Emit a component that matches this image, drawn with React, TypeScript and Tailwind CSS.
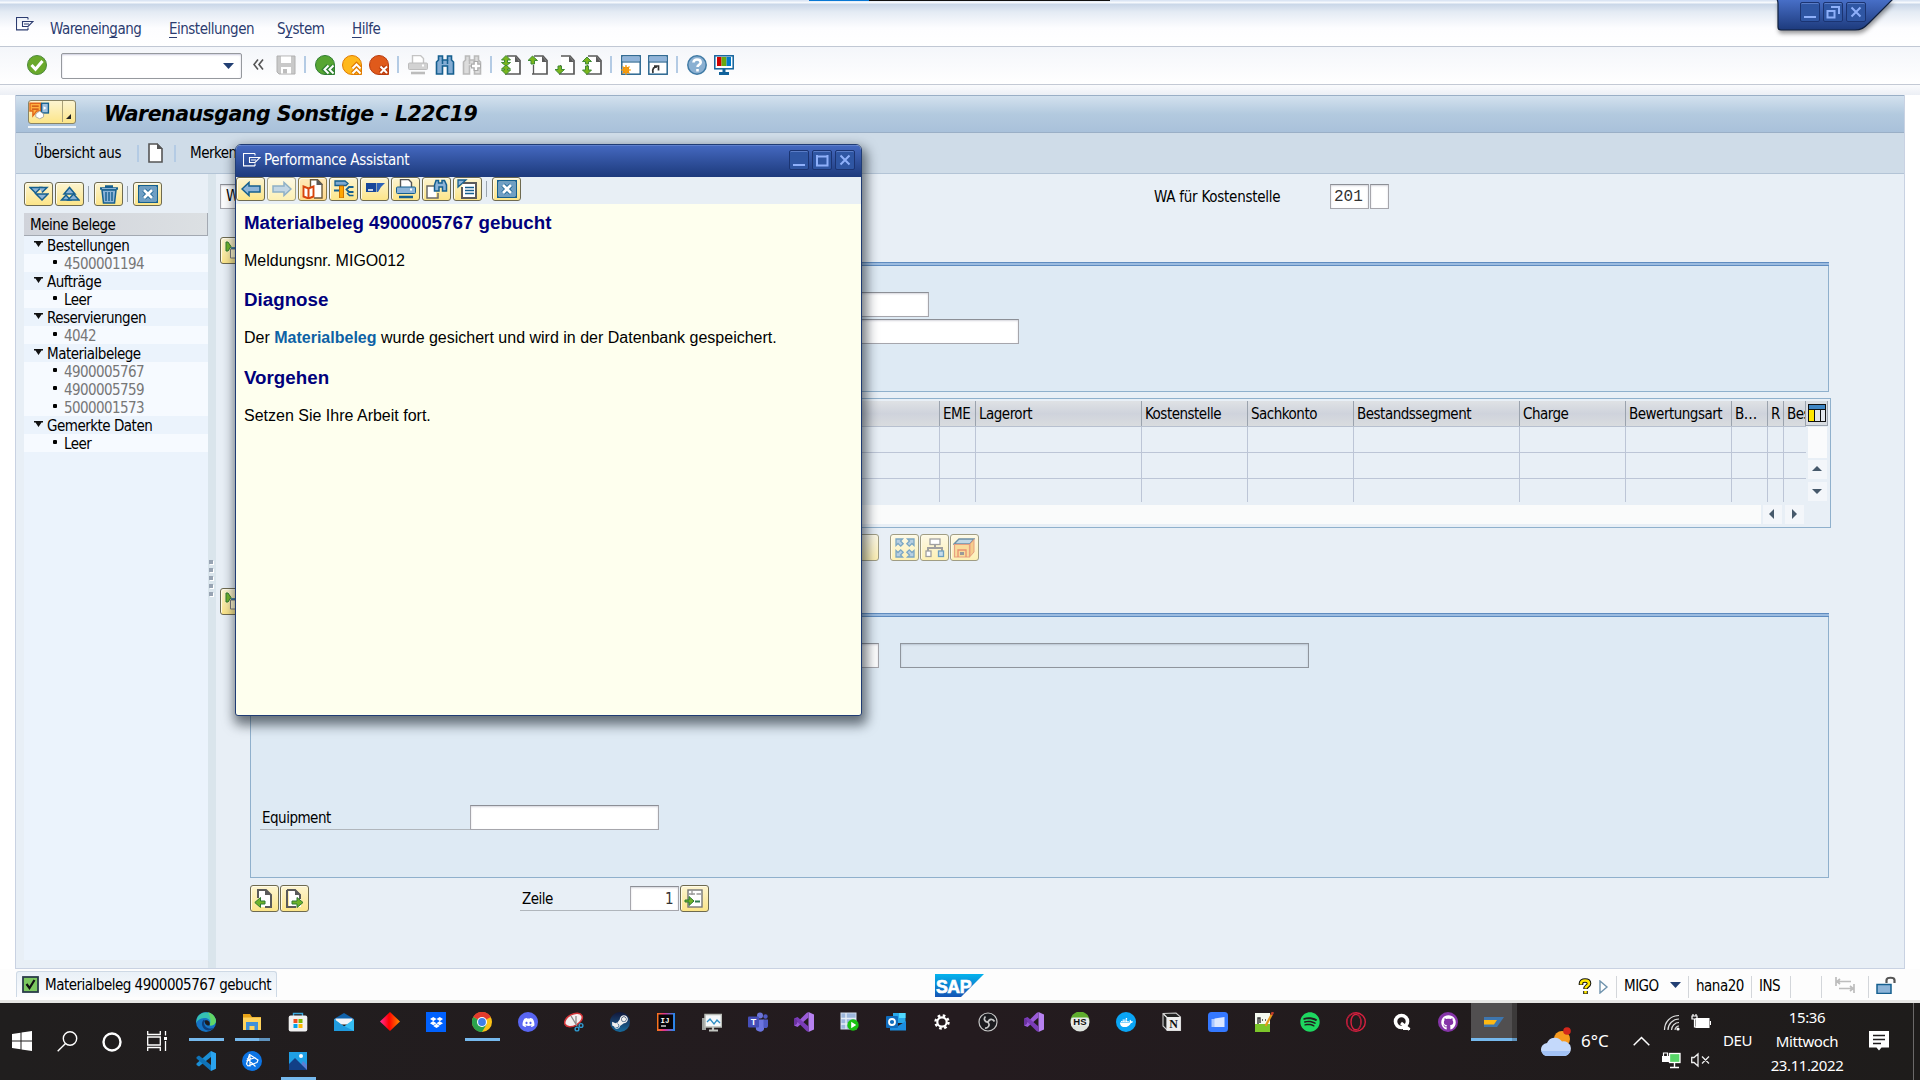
import React from "react";
import { FaDiscord, FaSteamSymbol, FaSpotify, FaDropbox, FaDocker, FaGithub } from "react-icons/fa";

type Kids = { children?: React.ReactNode };

function Svg({ w = 20, h = 20, children, className = "" }: Kids & { w?: number; h?: number; className?: string }) {
  return (
    <svg width={w} height={h} viewBox={`0 0 ${w} ${h}`} fill="none" className={`block shrink-0 ${className}`}>
      {children}
    </svg>
  );
}

const Sep = () => <div className="mx-2 h-[17px] w-[2px] shrink-0 bg-[#b4cbe4]" />;
const GroupSep = () => <div className="ml-[1px] mr-[2px] h-[17px] w-[2px] shrink-0 bg-[#b4cbe4]" />;

/* ---------- standard toolbar icons ---------- */
const MenuGlyph = ({ color }: { color: string }) => (
  <Svg w={18} h={14}>
    <path d="M12 .5H.5v12.400H12M12 .5v2M12 10.500v2.400M6.500 4.500H17l-5 5H6.500zM8 7h5" stroke={color} strokeWidth="1.100" />
  </Svg>
);

const OkIcon = () => (
  <Svg>
    <circle cx="10" cy="10" r="9.500" fill="#6aa92b" stroke="#4d8a3c" />
    <path d="M4.500 10l4 4.300 7-8.300" stroke="#fff" strokeWidth="3" />
  </Svg>
);

const SaveIcon = () => (
  <Svg>
    <path d="M1 1h18v18H3l-2-2z" fill="#c9c9c9" stroke="#b0b0b0" />
    <path d="M5 1.500h10V8H5zM5 12h10v6.500H5z" fill="#fff" />
    <path d="M7 14h4v4.500H7z" fill="#bdbdbd" />
  </Svg>
);

function RoundIcon({ fill, edge, d }: { fill: string; edge: string; d: string }) {
  return (
    <Svg>
      <path d="M10 .5a9.500 9.500 0 1 0 0 19h9.500V10A9.500 9.500 0 0 0 10 .5z" fill={fill} stroke={edge} />
      <path d={d} stroke={edge} strokeWidth="4.500" />
      <path d={d} stroke="#fff" strokeWidth="2" />
    </Svg>
  );
}

const PrintIcon = ({ body, dark, paper }: { body: string; dark: string; paper: string }) => (
  <Svg>
    <path d="M4.500 8V.5h8l3 3V8" fill="#fff" stroke={paper} strokeWidth="1.400" />
    <rect x=".5" y="8" width="19" height="6.500" rx="1" fill={body} stroke={dark} />
    <rect x="14" y="9.500" width="2" height="2" fill="#fff" />
    <path d="M3 18h14" stroke={dark} strokeWidth="2.600" />
  </Svg>
);

const FindIcon = ({ a, b, plus = false }: { a: string; b: string; plus?: boolean }) => (
  <Svg>
    <path d="M3.500 1h4v4h5V1h4v4l2 2v12h-6v-8h-5v8h-6V7l2-2z" fill={a} stroke={b} strokeWidth="1.600" />
    <path d="M7.500 5v4M12.500 5v4" stroke={b} strokeWidth="1.500" />
    {plus && <path d="M14 6v10M9 11h10" stroke="#aaa" strokeWidth="5" />}
    {plus && <path d="M14 7v8M10 11h8" stroke="#fff" strokeWidth="2.400" />}
  </Svg>
);

const up = "M4.500 1L0 5.500h3V9h3.500V5.500h3z";
const down = "M4.500 19L0 14.500h3V11h3.500v3.500h3z";
const upTop = "M5 .5L.5 5h3v2.500H.5L5 11l4.500-3.500h-3V5h3z";
const upBottom = "M5 10L.5 14h3v1H.5L5 19.500 9.500 15h-3v-1h3z";
function PageIcon({ arrows }: { arrows: string[] }) {
  return (
    <Svg>
      <path d="M6 1h9l4 4v14H6" fill="#fff" />
      <path d="M6 1h9l4 4.500V19H4" stroke="#5a5a5a" strokeWidth="1.700" />
      <path d="M5.500 10v9" stroke="#5a5a5a" strokeWidth="1.300" />
      <path d="M14 1v6h5z" fill="#5a5a5a" />
      {arrows.map((d) => (
        <path key={d} d={d} fill="#7ab51d" stroke="#3f8a35" strokeWidth="1" />
      ))}
    </Svg>
  );
}

function WindowIcon({ children }: Kids) {
  return (
    <Svg>
      <rect x=".8" y=".8" width="18.400" height="18.400" fill="#fff" stroke="#2a6690" strokeWidth="1.500" />
      <rect x="1.500" y="1.500" width="17" height="5" fill="#90b4da" />
      <path d="M1 7h18" stroke="#2a6690" strokeWidth="1.200" />
      {children}
    </Svg>
  );
}

const HelpIcon = () => (
  <Svg>
    <circle cx="10" cy="10" r="9.200" fill="#8bb0d2" stroke="#3f7aa5" strokeWidth="1.500" />
    <path d="M6.500 7.500c0-2 1.500-3 3.500-3s3.700 1 3.700 3c0 2.300-3.200 2.300-3.200 4.500M10.500 14v2.400" stroke="#fff" strokeWidth="2.600" />
  </Svg>
);

const MonitorIcon = () => (
  <Svg>
    <rect x=".8" y=".8" width="18.400" height="13" fill="#fff" stroke="#11629b" strokeWidth="1.500" />
    <path d="M3 2h4.500v9H3z" fill="#d00000" />
    <path d="M7.500 2h5v9h-5z" fill="#6aa80f" />
    <path d="M12.500 2H17v9h-4.500z" fill="#0079c8" />
    <path d="M10 14v4M5 18.500h10" stroke="#11629b" strokeWidth="3" />
  </Svg>
);

/* ---------- yellow push buttons ---------- */
function Btn({ children, tall = false, dim = false, hot = false }: Kids & { tall?: boolean; dim?: boolean; hot?: boolean }) {
  return (
    <div
      className={`flex w-[29px] shrink-0 items-center justify-center rounded-[3px] border-[1.500px] bg-gradient-to-b ${tall ? "h-[27px]" : "h-6"} ${
        dim ? "border-[#a09d84] from-[#fdf9e6] to-[#fdf0b4]" : hot ? "border-[#8a7a48] from-[#ffe9b8] to-[#ffd98a]" : "border-[#6e6a50] from-[#fcf4d0] to-[#fce588]"
      } shadow-[inset_1px_1px_0_#fffbe8]`}
    >
      {children}
    </div>
  );
}

const BSep = () => <div className="mx-[4px] mt-1 h-4 w-px shrink-0 bg-[#9aa4ae]" />;
const blueA = "#8db4d8";
const blueB = "#155f8f";

const CloseBox = () => (
  <Svg w={20} h={18}>
    <rect x=".8" y=".8" width="18.400" height="16.400" fill="#fff" stroke="#155f8f" strokeWidth="1.600" />
    <rect x="2" y="2" width="16" height="14" fill="#6f9fc4" />
    <path d="M6 5l8 8M14 5l-8 8" stroke="#155f8f" strokeWidth="4.500" />
    <path d="M6 5l8 8M14 5l-8 8" stroke="#fff" strokeWidth="2.800" />
  </Svg>
);

const Expand = () => (
  <Svg w={20} h={18}>
    <path d="M1 2.500h11L6.500 8zM7 9h12l-6 6z" fill={blueA} stroke={blueB} strokeWidth="1.500" />
    <path d="M10 2.500h8l-5 5" fill={blueA} stroke={blueB} strokeWidth="1.500" />
  </Svg>
);
const Collapse = () => (
  <Svg w={20} h={18}>
    <path d="M4 9h11L9.500 2.500z" fill={blueA} stroke={blueB} strokeWidth="1.500" />
    <path d="M1.500 15h9l-4.500-5z" fill={blueA} stroke={blueB} strokeWidth="1.500" />
    <path d="M8 15h11l-5.500-6z" fill={blueA} stroke={blueB} strokeWidth="1.500" />
  </Svg>
);
const Trash = () => (
  <Svg w={20} h={20}>
    <path d="M3 6h14l-1.500 13h-11z" fill={blueA} stroke={blueB} strokeWidth="1.500" />
    <path d="M7 8v9M10 8v9M13 8v9" stroke={blueB} strokeWidth="1.400" />
    <path d="M1 4.500h18M6 2.500h8" stroke={blueB} strokeWidth="2.600" />
    <path d="M3 4.500h14" stroke={blueA} strokeWidth="1" />
  </Svg>
);
const Arrow = ({ flip = false, dim = false }) => (
  <Svg w={20} h={16} className={flip ? "-scale-x-100" : ""}>
    <path d="M1 8l7-6.500V5h11v6H8v3.500z" fill={dim ? "#c3d6e4" : blueA} stroke={dim ? "#8fb0c6" : blueB} strokeWidth="1.500" />
  </Svg>
);
const DocBook = () => (
  <Svg w={22} h={20}>
    <path d="M8.500 8V.8h7l4.500 4.500V19h-8" fill="#fff" stroke="#6a5a3c" strokeWidth="1.400" />
    <path d="M14.500 0v6H21z" fill="#5a5a5a" />
    <path d="M1.500 7.500l5 2 5-2v10l-5 2-5-2z" fill="#fff" stroke="#d8440c" strokeWidth="1.900" />
    <path d="M6.500 9.500v10" stroke="#d8440c" strokeWidth="2" />
  </Svg>
);
const Tools = () => (
  <Svg w={20} h={18}>
    <path d="M1 1h10l3 2.500-2 2H1z" fill="#7fa9cf" stroke={blueB} strokeWidth="1.300" />
    <path d="M19.500 7H15l-2.500 2.500L15 12h4.500" stroke={blueB} strokeWidth="1.800" />
    <path d="M13 13l2.500 2.500h4" stroke={blueB} strokeWidth="1.600" />
    <path d="M5.500 6h4v12h-4z" fill="#ffa500" stroke="#cf7200" />
    <path d="M0 10.500h5" stroke={blueB} strokeWidth="2.200" />
  </Svg>
);
const Flag = () => (
  <Svg w={20} h={14}>
    <rect x="1" y="1" width="10" height="9" fill="#18479a" />
    <path d="M11.500 1H20l-4 4-3 5h-1.500z" fill="#2d62b8" />
    <path d="M3 8h5" stroke="#fff" strokeWidth="1.300" />
  </Svg>
);
const DocFind = () => (
  <Svg w={22} h={20}>
    <path d="M1 7.500h9V19H1z" fill="#fff" />
    <path d="M8 7H1v12h11v-5" stroke="#6a6a6a" strokeWidth="1.500" />
    <path d="M10 1.500h2.500V4H16V1.500h2.500L20.500 6v6h-4V8H13v4H8.500V6z" fill={blueA} stroke={blueB} strokeWidth="1.500" />
  </Svg>
);
const DocList = () => (
  <Svg w={22} h={20}>
    <path d="M6 4h13v15H5V8" fill="#fff" stroke="#5a5a5a" strokeWidth="2" />
    <path d="M1 1h8L1 8z" fill={blueA} stroke={blueB} strokeWidth="1.300" />
    <path d="M8 8.500h9M8 11.500h9M8 14.500h9" stroke={blueB} strokeWidth="1.500" />
  </Svg>
);
const DocMove = ({ right = false }) => (
  <Svg w={20} h={20} className="-ml-px">
    <path d="M5 1h7l5 5v12H5z" fill="#fff" />
    {right ? (
      <path d="M3 1v17h9M3 1h8l5 5v4" stroke="#5a5a5a" strokeWidth="2" />
    ) : (
      <path d="M4 9V1h8l5 5v12h-6" stroke="#5a5a5a" strokeWidth="2" />
    )}
    <path d="M11 0v6h6z" fill="#5a5a5a" />
    {right ? (
      <path d="M8 12h5V8.500l6 5-6 5V15H8z" fill="#6fb32a" stroke="#2f7a30" />
    ) : (
      <path d="M11 12H6.500V8.500L.8 13.500l5.700 5V15H11z" fill="#6fb32a" stroke="#2f7a30" />
    )}
  </Svg>
);
const GoLine = () => (
  <Svg w={20} h={20} className="-ml-[2px]">
    <rect x="4" y="1" width="14" height="17" fill="#fff" stroke="#777" strokeWidth="1.400" />
    <path d="M8 1v5M5 5h6M12.500 5H17" stroke="#999" strokeWidth="1.300" />
    <path d="M11 12.500h5" stroke="#2f7a50" strokeWidth="2" />
    <path d="M1 11h4V7.500l5 4.500-5 4.500V13H1z" fill="#6fb32a" stroke="#2f7a30" />
  </Svg>
);
const Spread = () => (
  <Svg w={20} h={20}>
    {["", "rotate(90 10 10)", "rotate(180 10 10)", "rotate(270 10 10)"].map((t) => (
      <path key={t} transform={t} d="M1 1h6.500L5.500 3l2.700 2.700-2.500 2.500L3 5.500 1 7.500z" fill="#b9d0e2" stroke="#7ba7c4" strokeWidth="1.300" />
    ))}
  </Svg>
);
const Tree = () => (
  <Svg w={20} h={20}>
    <path d="M10 6v4M3 13v-3h14v3" stroke="#a0a0a0" strokeWidth="2" />
    <rect x="5" y="1" width="10" height="5.500" fill="#fff" stroke="#a0a0a0" strokeWidth="1.300" />
    <rect x="1" y="13" width="5" height="5.500" fill="#fff" stroke="#a0a0a0" strokeWidth="1.300" />
    <rect x="13.500" y="13" width="5" height="5.500" fill="#c6dcea" stroke="#6d9fc0" strokeWidth="1.300" />
  </Svg>
);
const Box = () => (
  <Svg w={22} h={20} className="-ml-[2px]">
    <path d="M1 6l5-5h15l-4 5z" fill="#c0d8e6" stroke="#6d8fa5" strokeWidth="1.400" />
    <path d="M1.500 6.500h15V19h-15z" fill="#f8dc9c" stroke="#e8a080" strokeWidth="1.200" />
    <path d="M17 6l4-4.500V14l-4 4.500z" fill="#f5cc8c" stroke="#e8a080" />
    <path d="M5 19v-7h8v7" stroke="#e89070" strokeWidth="1.300" />
    <rect x="7" y="14" width="4" height="3" fill="#999" />
  </Svg>
);
const FormStub = () => (
  <Svg w={20} h={20}>
    <path d="M1 1h2l3 4.500L3 10H1z" fill="#6fb32a" stroke="#2f7a30" />
    <path d="M5.500 8h13v9h-13z" fill="#fff6c8" stroke="#777" />
    <path d="M6 7h12" stroke={blueB} strokeWidth="1.500" />
  </Svg>
);

/* ---------- form pieces ---------- */
function Field({ className, children }: Kids & { className: string }) {
  return (
    <div
      className={`h-[25px] shrink-0 border border-[#a6a6ac] border-t-[#8c8f96] bg-white shadow-[inset_0_1px_2px_#d5d5dc] ${className}`}
    >
      {children}
    </div>
  );
}

const columns: [string, string][] = [
  ["", "w-[689px]"],
  ["EME", "w-[36px]"],
  ["Lagerort", "w-[166px]"],
  ["Kostenstelle", "w-[106px]"],
  ["Sachkonto", "w-[106px]"],
  ["Bestandssegment", "w-[166px]"],
  ["Charge", "w-[106px]"],
  ["Bewertungsart", "w-[106px]"],
  ["B…", "w-[36px]"],
  ["R", "w-[16px]"],
  ["Bes", "w-[22px]"],
];

const tree: [string, 0 | 1 | 2][] = [
  ["Bestellungen", 0],
  ["4500001194", 1],
  ["Aufträge", 0],
  ["Leer", 2],
  ["Reservierungen", 0],
  ["4042", 1],
  ["Materialbelege", 0],
  ["4900005767", 1],
  ["4900005759", 1],
  ["5000001573", 1],
  ["Gemerkte Daten", 0],
  ["Leer", 2],
];

function TitleBtn({ d }: { d: string }) {
  return (
    <div className="flex h-5 w-5 items-center justify-center rounded-[2px] border border-[#1b3472] bg-[#2f56a3] shadow-[inset_0_1px_0_#5a7cc6]">
      <Svg w={14} h={14}>
        <path d={d} stroke="#8fb0fa" strokeWidth="2" />
      </Svg>
    </div>
  );
}
const MIN = "M1 12h12";
const MAX = "M2 3.500h11M2 2v10.500h10.500V2";
const RESTORE = "M5 2h8v7M1.500 6h7v6.500h-7z";
const CLOSE = "M2.500 2.500l9 9M11.500 2.500l-9 9M4 4l6 6M10 4l-6 6";

/* ---------- left navigation ---------- */
function Sidebar() {
  return (
    <div className="flex w-[192px] shrink-0 flex-col pb-2 pl-2">
      <div className="flex h-[39px] items-start pt-2">
        <Btn><Expand /></Btn>
        <div className="w-[2px]" />
        <Btn><Collapse /></Btn>
        <BSep />
        <div className="w-px" />
        <Btn><Trash /></Btn>
        <BSep />
        <div className="w-px" />
        <Btn><CloseBox /></Btn>
      </div>
      <div className="flex h-[23px] items-center border-r border-b border-[#a3a9b2] bg-gradient-to-r from-[#d0d3da] to-[#dce0e3] pt-[2px] pl-[6px]">
        Meine Belege
      </div>
      <div className="grow bg-[#ebf3fc]">
        {tree.map(([label, kind], i) => (
          <div key={i} className={`flex h-[18px] items-center ${kind === 0 ? "pl-[10px]" : "bg-[#f6faff] pl-[29px]"}`}>
            {kind === 0 ? (
              <Svg w={9} h={7} className="mr-1 mb-[2px]">
                <path d="M0 0h9v1.500H7.500L4.500 6 1.500 1.500H0z" fill="#111" />
              </Svg>
            ) : (
              <div className="mr-[7px] mb-[2px] h-1 w-1 rounded-[1px] bg-black" />
            )}
            <span className={`pt-[2px] ${kind === 1 ? "tracking-[-0.590px] text-[#777]" : ""}`}>{label}</span>
          </div>
        ))}
      </div>
    </div>
  );
}

const ScrollBtn = ({ d }: { d: string }) => (
  <div className="flex h-[19px] w-[19px] items-center justify-center bg-[#f3f6fa]">
    <Svg w={10} h={10} className="-mt-px -ml-px">
      <path d={d} fill="#46596b" />
    </Svg>
  </div>
);

function ItemTable() {
  return (
    <div className="mt-[6px] ml-[34px] h-[130px] w-[1581px] border border-[#8fb0cc] pt-[2px]">
      <div className="flex">
        <div className="w-[1555px] overflow-hidden">
          <div className="flex h-[26px] border-b border-[#b7c0cf]">
            {columns.map(([label, w], i) => (
              <div
                key={i}
                className={`flex shrink-0 items-center overflow-hidden border-r border-[#9ba3ae] bg-gradient-to-b from-[#dfe2e5] via-[#cfd3dc] to-[#d9dcdf] pt-[2px] pl-[3px] whitespace-nowrap ${w}`}
              >
                {label}
              </div>
            ))}
          </div>
          {[0, 1, 2].map((r) => (
            <div key={r} className={`flex ${r < 2 ? "h-[26px] border-b border-[#bcc5d6]" : "h-[23px]"}`}>
              {columns.map(([, w], i) => (
                <div key={i} className={`shrink-0 border-[#bcc5d6] ${i < 10 ? "border-r" : ""} ${w}`} />
              ))}
            </div>
          ))}
        </div>
        <div className="flex flex-col">
          <div className="flex h-[25px] w-[22px] items-center justify-center border-r border-b border-[#9ba3ae] bg-[#d9dde2]">
            <Svg w={18} h={18}>
              <rect width="18" height="18" fill="#111" />
              <path d="M1 1h16v4H1z" fill="#3f86c4" />
              <path d="M1 6h5V17H1z" fill="#ffe600" />
              <path d="M7 6h5v11H7zM13 6h4v11h-4z" fill="#e2e6ec" />
            </Svg>
          </div>
          <div className="mt-px ml-[2px] h-[31px] w-[19px] bg-[#fafbfc]" />
          <div className="mt-[2px] ml-[2px]"><ScrollBtn d="M0 7l5-5 5 5z" /></div>
          <div className="mt-[3px] ml-[2px]"><ScrollBtn d="M0 3l5 5 5-5z" /></div>
        </div>
      </div>
      <div className="mt-[3px] flex gap-[3px]">
        <div className="mr-[-1px] h-[19px] w-[1510px] bg-[#fafbfb]" />
        <ScrollBtn d="M7 0L2 5l5 5z" />
        <ScrollBtn d="M3 0l5 5-5 5z" />
      </div>
    </div>
  );
}

const panel = "w-[1579px] border border-[#8fb0cc] border-t-0 bg-[#deeaf4]";
const PanelTop = () => <div className="-mx-px h-[4px] border-y border-[#5f8cc0] bg-[#9cbce0]" />;

function MainForm() {
  return (
    <div className="flex min-w-0 grow flex-col">
      <div className="mt-[10px] ml-1 flex h-[25px] items-center">
        <Field className="flex w-[500px] items-center pl-[5px]">WA Warenausgang</Field>
        <span className="ml-[434px] w-[176px] pt-[2px] tracking-[-0.250px]">WA für Kostenstelle</span>
        <Field className="flex w-[39px] items-center pl-[3px] font-['Liberation_Mono',monospace] text-[16px] tracking-normal text-[#333]">201</Field>
        <Field className="ml-px w-[19px]" />
      </div>
      <div className="mt-[28px] ml-1 flex items-start gap-px">
        <Btn tall><FormStub /></Btn>
        <div className={`mt-[25px] h-[130px] ${panel}`}>
          <PanelTop />
          <Field className="mt-[26px] ml-[470px] w-[208px]" />
          <Field className="mt-[2px] ml-[470px] w-[298px]" />
        </div>
      </div>
      <ItemTable />
      <div className="mt-[6px] ml-[634px] flex h-[27px] gap-px">
        <Btn tall dim />
        <div className="w-[9px]" />
        <Btn tall dim><Spread /></Btn>
        <Btn tall dim><Tree /></Btn>
        <Btn tall dim><Box /></Btn>
      </div>
      <div className="mt-[27px] ml-1 flex items-start gap-px">
        <Btn tall><FormStub /></Btn>
        <div className={`mt-[25px] h-[265px] ${panel}`}>
          <PanelTop />
          <div className="mt-[26px] ml-[219px] flex">
            <Field className="w-[409px]" />
            <div className="ml-[21px] h-[25px] w-[409px] border border-[#8f959d] bg-[#dde8f2] shadow-[inset_0_1px_2px_#b9c4d0]" />
          </div>
          <div className="mt-[137px] ml-[9px] flex">
            <div className="flex h-[25px] w-[210px] items-center border-b border-[#b0b6bc] pt-[2px] pl-[2px]">Equipment</div>
            <Field className="w-[189px]" />
          </div>
        </div>
      </div>
      <div className="mt-[7px] ml-[34px] flex h-[27px] items-center">
        <Btn tall><DocMove /></Btn>
        <div className="w-px" />
        <Btn tall><DocMove right /></Btn>
        <div className="ml-[211px] flex h-[25px] w-[110px] items-center border-b border-[#b0b6bc] pt-[2px] pl-[2px]">Zeile</div>
        <Field className="mr-px flex w-[49px] items-center justify-end pt-px pr-[5px] text-[#333]">1</Field>
        <Btn tall><GoLine /></Btn>
      </div>
    </div>
  );
}

/* ---------- Performance Assistant ---------- */
function Assistant() {
  return (
    <div className="absolute top-[144px] left-[235px] flex h-[572px] w-[627px] flex-col overflow-hidden rounded-t-[6px] rounded-b-[3px] border border-[#203c74] bg-[#feffee] shadow-[2px_6px_12px_3px_rgba(20,30,40,0.6)]">
      <div className="flex h-8 shrink-0 items-center gap-[3px] border-t border-[#5f80cc] bg-gradient-to-b from-[#4468bf] to-[#1d3a7c] pr-[6px] pb-[3px] pl-[7px]">
        <MenuGlyph color="#fff" />
        <span className="grow pt-px tracking-[-0.280px] text-white">Performance Assistant</span>
        <TitleBtn d={MIN} />
        <TitleBtn d={MAX} />
        <TitleBtn d={CLOSE} />
      </div>
      <div className="flex h-[27px] shrink-0 items-start gap-[2px] bg-[#e8eff5]">
        <Btn><Arrow /></Btn>
        <Btn dim><Arrow flip dim /></Btn>
        <Btn hot><DocBook /></Btn>
        <Btn><Tools /></Btn>
        <Btn><Flag /></Btn>
        <Btn><PrintIcon body="#8db4d8" dark="#155f8f" paper="#555" /></Btn>
        <Btn><DocFind /></Btn>
        <Btn><DocList /></Btn>
        <div className="mr-[3px] ml-[2px] mt-1 h-4 w-px bg-[#9aa4ae]" />
        <Btn><CloseBox /></Btn>
      </div>
      <div className="flex flex-col pl-[8px] font-['Liberation_Sans',Arial,sans-serif] text-[16px] tracking-normal text-black">
        <h1 className="mt-[7px] h-[39px] text-[18.750px] leading-[24px] font-bold text-[#00007c]">Materialbeleg 4900005767 gebucht</h1>
        <p className="h-[38px] leading-[22px]">Meldungsnr. MIGO012</p>
        <h2 className="h-[39px] text-[18.750px] leading-[24px] font-bold text-[#00007c]">Diagnose</h2>
        <p className="h-[39px] leading-[22px]">
          Der <b className="text-[#0d62a5]">Materialbeleg</b> wurde gesichert und wird in der Datenbank gespeichert.
        </p>
        <h2 className="h-[39px] text-[18.750px] leading-[24px] font-bold text-[#00007c]">Vorgehen</h2>
        <p className="leading-[22px]">Setzen Sie Ihre Arbeit fort.</p>
      </div>
    </div>
  );
}

/* ---------- status bar ---------- */
const SSep = ({ className }: { className: string }) => <div className={`h-[22px] w-px bg-[#d3d6da] ${className}`} />;

function StatusBar() {
  return (
    <div className="flex h-[34px] items-start border-b-[3px] border-[#e6e6e4] bg-[#fdfdfd] pt-[2px] pl-4">
      <div className="flex h-[26px] w-[261px] items-center gap-[6px] rounded-t-[3px] border border-b-0 border-[#ced9e5] bg-gradient-to-b from-[#e9f0f7] to-[#fbfcfd] pl-[5px] whitespace-nowrap">
        <Svg w={17} h={17}>
          <rect x="1" y="1" width="15" height="15" fill="#7cc860" stroke="#2a3c4a" strokeWidth="1.800" />
          <path d="M4.500 8l3 4 5-8" stroke="#111" strokeWidth="2.200" />
        </Svg>
        <span className="pt-px">Materialbeleg 4900005767 gebucht</span>
      </div>
      <svg width="49" height="23" viewBox="0 0 49 23" className="mt-[3px] ml-[658px] shrink-0">
        <defs>
          <linearGradient id="sap" x1="0" y1="0" x2="0" y2="1">
            <stop offset="0" stopColor="#04b4ee" />
            <stop offset="1" stopColor="#1554b4" />
          </linearGradient>
        </defs>
        <path d="M0 0h49L26 23H0z" fill="url(#sap)" />
        <text x="1" y="18.500" textLength="35" lengthAdjust="spacingAndGlyphs" fontFamily="Liberation Sans" fontWeight="bold" fontSize="19" fill="#fff" stroke="#fff" strokeWidth=".7">SAP</text>
      </svg>
      <div className="ml-[594px] flex h-[29px] items-center pt-[2px]">
        <Svg w={14} h={18}>
          <path d="M3 7V5.500C3 3.500 4.500 2.500 7 2.500s4 1 4 3c0 2.500-3.500 2.500-3.500 5.500M7.500 13v3" stroke="#111" strokeWidth="4.600" />
          <path d="M3 6.500v-1C3 3.500 4.500 2.500 7 2.500s4 1 4 3c0 2.500-3.500 2.500-3.500 5M7.500 13v2.500" stroke="#ffe900" strokeWidth="2.600" />
        </Svg>
        <Svg w={10} h={14} className="ml-[7px]">
          <path d="M1 1l7 6-7 6z" fill="#fff" stroke="#6f93ad" strokeWidth="1.400" />
        </Svg>
        <SSep className="mr-[7px] ml-[7px]" />
        <span className="w-[46px]">MIGO</span>
        <Svg w={11} h={6} className="mb-1">
          <path d="M0 0h11L5.500 6z" fill="#223f73" />
        </Svg>
        <SSep className="mr-[7px] ml-[7px]" />
        <span className="w-[55px]">hana20</span>
        <SSep className="mr-[7px]" />
        <span className="w-[31px]">INS</span>
        <SSep className="mr-[30px]" />
        <SSep className="mr-[13px]" />
        <Svg w={20} h={16} className="mb-1">
          <path d="M1 0v9M1 4.500h15M5 2L2 4.500 5 7M19 7v9M4 11.500h15M15 9l3 2.500-3 2.500" stroke="#bdbdbd" strokeWidth="1.700" />
        </Svg>
        <SSep className="mr-[7px] ml-[13px]" />
        <Svg w={20} h={18} className="mb-1">
          <rect x="1" y="8.500" width="14" height="9" fill="#8db4d8" stroke="#155f8f" strokeWidth="1.500" />
          <path d="M10.500 7V4c0-3 8-3 8 0v3" stroke="#555" strokeWidth="2.200" />
        </Svg>
      </div>
    </div>
  );
}

/* ---------- Windows taskbar ---------- */
const Disc = ({ bg, children }: Kids & { bg: string }) => (
  <div className={`flex h-5 w-5 items-center justify-center rounded-full ${bg}`}>{children}</div>
);

const Edge = (
  <Svg>
    <circle cx="10" cy="10" r="10" fill="#1573c4" />
    <path d="M1 6.500C3-1 17-2.500 19.800 8c.5 4-2.500 6-6.300 5.500C16 9 12 5.500 8 6 4.500 6.300 1.500 8 0 11z" fill="#35c1b2" />
    <path d="M12 .3c4.500 1 8 5 7.900 9-.4 3-3 4.600-6.400 4.200C16 9 14 4 12 .3z" fill="#62d665" />
    <path d="M8 7.500c-3 2-3 8 2 10.500 3 1 6 0 7.500-2-4 1.500-9-.5-9.500-4.500 0-1.500.8-2 1-2.500z" fill="#0e3f7c" />
    <path d="M13.500 13.500C11 14 8 12 9 8.500c3.500-.8 5.500 2 4.500 5z" fill="#1f1c1e" />
  </Svg>
);
const Folder = (
  <Svg>
    <path d="M1 2h7l2 3h9v13H1z" fill="#e8a317" />
    <path d="M1 5.500h18V18H1z" fill="#ffd35c" />
    <path d="M4 10h12v8h-3.500v-4h-5v4H4z" fill="#3f8fd8" />
  </Svg>
);
const Store = (
  <Svg>
    <path d="M5.500 4V1.500h9V4" stroke="#3aa7dc" strokeWidth="1.400" />
    <rect x=".7" y="3.500" width="18.600" height="16" rx="2" fill="#f1f1f1" />
    <path d="M5.500 7h4v4h-4z" fill="#f04e1f" />
    <path d="M10.500 7h4v4h-4z" fill="#7db900" />
    <path d="M5.500 12h4v4h-4z" fill="#00a3ee" />
    <path d="M10.500 12h4v4h-4z" fill="#ffb800" />
  </Svg>
);
const Mail = (
  <Svg>
    <path d="M0 7l10-6 10 6v4H0z" fill="#0f62ab" />
    <path d="M1.500 6.500h17v6h-17z" fill="#f1f4f8" />
    <path d="M0 7l10 7.500L20 7v12H0z" fill="#35bdf2" />
    <path d="M0 7v12h20L8 13z" fill="#1f9bde" />
  </Svg>
);
const Diamond = (
  <Svg>
    <defs>
      <linearGradient id="dia">
        <stop offset="0" stopColor="#ff2fa0" />
        <stop offset=".45" stopColor="#ff0000" />
        <stop offset="1" stopColor="#ff8c00" />
      </linearGradient>
    </defs>
    <path d="M10 0l10 9.500L10 19 0 9.500z" fill="url(#dia)" />
  </Svg>
);
const Dropbox = (
  <div className="flex h-5 w-5 items-center justify-center bg-[#0061fe]"><FaDropbox size={13} color="#fff" /></div>
);
const Chrome = (
  <Svg>
    <circle cx="10" cy="10" r="10" fill="#fbc116" />
    <path d="M10 10L1.300 5A10 10 0 0 1 18.700 5z" fill="#e33b2e" />
    <path d="M10 10L1.300 5A10 10 0 0 0 10 20l4.500-7.500z" fill="#2ba24c" />
    <circle cx="10" cy="10" r="5" fill="#fff" />
    <circle cx="10" cy="10" r="3.900" fill="#3f7fe8" />
  </Svg>
);
const Discord = <Disc bg="bg-[#5865f2]"><FaDiscord size={13} color="#fff" /></Disc>;
const Snip = (
  <Svg>
    <ellipse cx="9.500" cy="8" rx="9.500" ry="5.800" transform="rotate(-28 9.500 8)" fill="#f3f0f0" stroke="#d13438" strokeWidth="1.600" />
    <path d="M7 4l6 10M12 4l0 9" stroke="#8a8a8a" strokeWidth="1.300" />
    <circle cx="13" cy="17" r="1.900" stroke="#2f9ad0" strokeWidth="1.400" />
    <circle cx="17" cy="13.500" r="1.900" stroke="#2f9ad0" strokeWidth="1.400" />
  </Svg>
);
const Steam = <Disc bg="bg-gradient-to-b from-[#10173a] to-[#156c9f]"><FaSteamSymbol size={18} color="#f0f0f0" /></Disc>;
const IntelliJ = (
  <Svg>
    <defs>
      <linearGradient id="ij">
        <stop offset="0" stopColor="#f97a12" />
        <stop offset=".4" stopColor="#e5318f" />
        <stop offset="1" stopColor="#1a8cf0" />
      </linearGradient>
    </defs>
    <rect x="1" y="1" width="18" height="18" fill="url(#ij)" />
    <rect x="2.500" y="2.500" width="14.500" height="14.500" fill="#060408" />
    <text x="4.500" y="10.500" fontFamily="Liberation Mono" fontWeight="bold" fontSize="7.500" fill="#fff">IJ</text>
    <path d="M5 14h5" stroke="#fff" strokeWidth="1.200" />
  </Svg>
);
const PerfMon = (
  <Svg>
    <path d="M0 6h4v12H0z" fill="#9fa3a0" />
    <rect x="3" y="2.500" width="16.500" height="12.500" fill="#f5f8fa" stroke="#b7bbb5" strokeWidth="1.500" />
    <path d="M5 10l3-3 4 5 3-4 3 3" stroke="#2f8ec4" strokeWidth="1.300" />
    <path d="M11 15v3M7 18.500h9" stroke="#c3c6c1" strokeWidth="2.200" />
  </Svg>
);
const Teams = (
  <Svg>
    <circle cx="12" cy="3.500" r="3" fill="#6b74d8" />
    <circle cx="17.500" cy="4.500" r="2.200" fill="#4f5ac4" />
    <path d="M7 7.500h9v9c0 4-6 4-8 1z" fill="#6b74e0" />
    <path d="M15.500 7.500H20v6c0 3-3 3-4.500 2z" fill="#4f5ac4" />
    <rect y="4.500" width="11" height="11" rx="1" fill="#454eb8" />
    <text x="2.700" y="13" fontFamily="Liberation Sans" fontWeight="bold" fontSize="9" fill="#fff">T</text>
  </Svg>
);
const VS = (
  <Svg>
    <path d="M14.500 0L20 2.500v15L14.500 20z" fill="#b681f0" />
    <path d="M14.500 0v5.500L3.500 15 0 13.500 12.500 1z" fill="#9a5bd8" />
    <path d="M14.500 20v-5.500L3.500 5 0 6.500 12.500 19z" fill="#7a3cb8" />
    <path d="M0 6.500L3 8v4l-3 1.500z" fill="#6a32a0" />
  </Svg>
);
const DbPlay = (
  <Svg>
    <rect x="1" y="1" width="15" height="16" fill="#9db7dc" stroke="#cfdced" />
    <path d="M1 6.500h15M1 12h15M6 1v16" stroke="#e6edf6" strokeWidth="1.400" />
    <circle cx="13" cy="13" r="5.700" fill="#19c20f" />
    <path d="M11.200 9.800l5 3.200-5 3.200z" fill="#fff" />
  </Svg>
);
const Outlook = (
  <Svg>
    <rect x="7" y="1" width="12.500" height="10" fill="#28a8ea" />
    <path d="M13 1h6.500v5H13z" fill="#50d9ff" />
    <path d="M4 18.500V9l8 5 8-5v9.500z" fill="#1b8de0" />
    <rect y="4" width="12" height="12" rx="1" fill="#0f6cbd" />
    <circle cx="6" cy="10" r="3" stroke="#fff" strokeWidth="1.800" />
  </Svg>
);
const Gear = (
  <Svg>
    <circle cx="10" cy="10" r="4.700" stroke="#fff" strokeWidth="2.200" />
    <circle cx="10" cy="10" r="6.500" stroke="#fff" strokeWidth="2.400" strokeDasharray="2.600 2.500" />
  </Svg>
);
const Obs = (
  <Svg>
    <circle cx="10" cy="10" r="9" fill="#1b1b1f" stroke="#c6c6c6" strokeWidth="1.200" />
    <path d="M10 10.500c-4-1-4.500-4-2.500-6M10 10.500c1-4 5-4 6.500-1M10 10.500c2.500 2.500 0 6-3 5.500" stroke="#c6c6c6" strokeWidth="1.700" />
  </Svg>
);
const Hs = (
  <Svg>
    <circle cx="10" cy="10" r="9.500" fill="#dfe4df" />
    <path d="M.5 9a9.500 9.500 0 0 1 19 0z" fill="#5fae2e" />
    <rect x="1" y="5.500" width="18" height="8.500" rx="2" fill="#e8ebe8" />
    <text x="3.300" y="13.300" fontFamily="Liberation Sans" fontWeight="bold" fontSize="9.500" fill="#111">HS</text>
  </Svg>
);
const Docker = <Disc bg="bg-[#0aa5f5]"><FaDocker size={13} color="#fff" /></Disc>;
const Notion = (
  <Svg>
    <path d="M1 1.500L14 1l4.500 4v13.500H5.500L1 14z" fill="#222" stroke="#ccc" strokeWidth="1.100" />
    <path d="M5 5.500h13M5 5.500v13M5 5.500L1.500 2" stroke="#eee" strokeWidth="1.200" />
    <rect x="5" y="5.500" width="13.500" height="13" fill="#eee" />
    <text x="7.300" y="16.200" fontFamily="Liberation Serif" fontWeight="bold" fontSize="12" fill="#111">N</text>
  </Svg>
);
const BlueApp = (
  <Svg>
    <rect width="20" height="20" rx="3.500" fill="#3478ff" />
    <path d="M3.500 7h5v8h-5z" fill="#a9c7ff" />
    <path d="M6.500 6.500L16.500 5v10h-10z" fill="#dbe7ff" />
  </Svg>
);
const Npp = (
  <Svg>
    <path d="M1 1h15v19H1z" fill="#f4f8ee" />
    <path d="M1 12h15v8H1z" fill="#7cc62a" />
    <path d="M4 12V6h2v5M8 8h1M11 8h1" stroke="#333" strokeWidth="1.400" />
    <path d="M18.500 1L11.500 14" stroke="#e59a1c" strokeWidth="2.200" />
    <path d="M19 0l-1.500 3" stroke="#c23b2c" strokeWidth="2.200" />
  </Svg>
);
const Spotify = <FaSpotify size={20} color="#1ed760" />;
const Opera = (
  <Svg>
    <circle cx="10" cy="10" r="9.300" stroke="#d8213f" strokeWidth="1.400" />
    <ellipse cx="10" cy="10" rx="5" ry="7.800" stroke="#d8213f" strokeWidth="1.400" />
    <ellipse cx="8" cy="10" rx="7" ry="9" stroke="#a31a36" strokeWidth="1" />
  </Svg>
);
const QApp = (
  <Svg>
    <circle cx="9.500" cy="9.500" r="6" stroke="#fff" strokeWidth="3.600" />
    <path d="M9 11l8.500 6.500" stroke="#fff" strokeWidth="3" />
    <path d="M11 17h7" stroke="#fff" strokeWidth="2" />
  </Svg>
);
const GitHub = <Disc bg="bg-[#8534a8]"><FaGithub size={15} color="#fff" /></Disc>;
const SapLogon = (
  <Svg>
    <path d="M0 5h20l-7 10H0z" fill="#3e76ae" />
    <path d="M0 8h13l-3 4.500H0z" fill="#fdb813" />
  </Svg>
);
const VsCode = (
  <Svg>
    <path d="M15 0l5 2.300v15.400L15 20z" fill="#2aa3ef" />
    <path d="M15 0v6L3 15.500.5 14v-1.500z" fill="#1b8fd6" />
    <path d="M15 20v-6L3 4.500.5 6v1.500z" fill="#0f73b8" />
  </Svg>
);
const Battle = (
  <Svg>
    <circle cx="10" cy="10" r="10" fill="#0c74e4" />
    <path d="M7.500 3.500L16 9l-1 2.500-9 3.500-1.500-2L7.500 3.500zM5 7.500l8.500 8M13.500 6.500l-9 3M8 5v10.500" stroke="#fff" strokeWidth="1.200" strokeLinejoin="round" />
  </Svg>
);
const Photos = (
  <Svg>
    <rect x="1" y="1" width="18" height="18" fill="#1f9fe4" />
    <path d="M10 19l5-9 4 4v5z" fill="#5a7fd4" />
    <path d="M1 13l6-6 12 12H1z" fill="#123f86" />
    <circle cx="13" cy="5" r="2" fill="#fff" />
  </Svg>
);

const appsTop: [React.ReactNode, string][] = [
  [Edge, "run"], [Folder, "multi"], [Store, ""], [Mail, ""], [Diamond, ""], [Dropbox, ""], [Chrome, "run"], [Discord, ""],
  [Snip, ""], [Steam, ""], [IntelliJ, ""], [PerfMon, ""], [Teams, ""], [VS, ""], [DbPlay, ""], [Outlook, ""], [Gear, ""],
  [Obs, ""], [VS, ""], [Hs, ""], [Docker, ""], [Notion, ""], [BlueApp, ""], [Npp, ""], [Spotify, ""], [Opera, ""],
  [QApp, ""], [GitHub, ""], [SapLogon, "active"],
];
const appsBottom: [React.ReactNode, string][] = [[VsCode, ""], [Battle, ""], [Photos, "run"]];

function AppCell({ icon, state }: { icon: React.ReactNode; state: string }) {
  return (
    <div
      className={`flex w-[46px] shrink-0 flex-col items-center ${
        state === "active" ? "h-[38px] bg-[linear-gradient(90deg,#514f50_41px,#3c3a3a_41px)]" : "h-[39px]"
      }`}
    >
      <div className="mt-[9px] mb-[6px]">{icon}</div>
      {state === "run" && <div className="h-[3px] w-[35px] bg-[#76b9ed]" />}
      {state === "multi" && <div className="h-[3px] w-[35px] border-r-[11px] border-[#5f93bd] bg-[#76b9ed]" />}
      {state === "active" && <div className="h-[3px] w-[46px] border-r-[5px] border-[#5f93bd] bg-[#76b9ed]" />}
    </div>
  );
}

function Taskbar() {
  return (
    <div className="flex h-[77px] items-center bg-gradient-to-r from-[#201e1e] via-[#241b1f] to-[#1e1c1b] font-['Noto_Sans',sans-serif] text-[15px] tracking-normal text-white">
      <Svg w={20} h={20} className="mb-px ml-3">
        <path d="M0 3l8.500-1.300V9.500H0zM9.500 1.500L20 0v9.500H9.500zM0 10.500h8.500v7.800L0 17zM9.500 10.500H20V20L9.500 18.500z" fill="#fff" />
      </Svg>
      <Svg w={21} h={21} className="mb-px ml-[25px]">
        <circle cx="13" cy="7.500" r="6.700" stroke="#fff" strokeWidth="1.400" />
        <path d="M8.500 12.500L.7 20.300" stroke="#fff" strokeWidth="1.400" />
      </Svg>
      <Svg w={20} h={20} className="ml-6">
        <circle cx="10" cy="10" r="8.500" stroke="#fff" strokeWidth="2.400" />
      </Svg>
      <Svg w={20} h={20} className="mb-px ml-[25px]">
        <path d="M.7 0v3.500h12.600V0M.7 20v-3.500h12.600V20M.7 6h12.600v8H.7zM18.500 0v4.500M18.500 10v10" stroke="#fff" strokeWidth="1.300" />
        <rect x="17" y="6" width="3" height="3" fill="#fff" />
      </Svg>
      <div className="ml-[16px] flex h-full w-[1334px] flex-col">
        <div className="flex">{appsTop.map(([icon, state], i) => <AppCell key={i} icon={icon} state={state} />)}</div>
        <div className="flex">{appsBottom.map(([icon, state], i) => <AppCell key={i} icon={icon} state={state} />)}</div>
      </div>
      <Svg w={30} h={30} className="ml-[24px]">
        <circle cx="21" cy="12" r="8" fill="#f79a1e" />
        <circle cx="26" cy="4" r="3.800" fill="#d3271b" />
        <path d="M7 29a6.500 6.500 0 0 1-1-13 8.500 8.500 0 0 1 15-1.500A7.300 7.300 0 0 1 24 29z" fill="#c4d9fb" />
        <path d="M7 29a6.500 6.500 0 0 1-6.500-5H29a6.500 6.500 0 0 1-5 5z" fill="#a3c3f6" />
      </Svg>
      <span className="mb-[2px] ml-[10px] w-[52px] text-[17px]">6°C</span>
      <Svg w={17} h={10} className="mb-[2px]">
        <path d="M.7 9.300l7.800-7.800 7.800 7.800" stroke="#fff" strokeWidth="1.500" />
      </Svg>
      <div className="ml-3 flex flex-col gap-[21px]">
        <Svg w={19} h={17}>
          <path d="M2.500 16C2.500 8 8.500 1.500 17 1.500M6 16c0-6 5-11 11-11M9.500 16c0-4 3.500-7.500 7.500-7.500M13 16c0-2 2-4 4-4" stroke="#ddd" strokeWidth="1.200" />
          <circle cx="16" cy="15" r="1.600" fill="#fff" />
        </Svg>
        <Svg w={19} h={17}>
          <rect x="7.500" y="1.500" width="10.500" height="9" fill="#58d668" stroke="#fff" strokeWidth="1.300" />
          <path d="M12.500 11v4M8 15.500h9" stroke="#fff" strokeWidth="1.400" />
          <path d="M0 4h7v6H0z" fill="#fff" />
          <path d="M1.500 4V1h4v3" stroke="#fff" strokeWidth="1.200" />
        </Svg>
      </div>
      <div className="ml-[10px] flex flex-col gap-[21px]">
        <Svg w={20} h={17}>
          <rect x="5" y="4.500" width="13" height="9" fill="#fff" stroke="#fff" />
          <path d="M19.500 7v4M1 2h5v3H1zM2 0v2M5 0v2M3.500 5v8H5" stroke="#fff" strokeWidth="1.200" />
        </Svg>
        <Svg w={20} h={17}>
          <path d="M.7 5.500H3L7 2v12L3 10.500H.7zM11 4.500l7 7M18 4.500l-7 7" stroke="#eee" strokeWidth="1.300" />
        </Svg>
      </div>
      <span className="mb-[2px] ml-[12px] w-[28px] text-[15px] tracking-[-0.400px]">DEU</span>
      <div className="mb-[2px] ml-[16px] flex w-[80px] flex-col items-center text-center leading-[24px] tracking-[-0.400px] whitespace-nowrap">
        <span>15:36</span>
        <span>Mittwoch</span>
        <span>23.11.2022</span>
      </div>
      <Svg w={20} h={20} className="mb-px ml-[22px]">
        <path d="M0 0h20v16.500h-7.500L10 19.500 7.500 16.500H0z" fill="#fff" />
        <path d="M4 4.500h12M4 8.500h12M4 12.500h8" stroke="#1f1c1e" strokeWidth="1.300" />
      </Svg>
      <div className="ml-[24px] h-full w-px bg-[#6b6969]" />
    </div>
  );
}

const U = ({ children }: Kids) => <span className="underline decoration-1 underline-offset-[3px]">{children}</span>;

export default function App() {
  return (
    <div className="relative flex h-[1080px] w-[1920px] flex-col overflow-hidden bg-white font-['DejaVu_Sans_Condensed','DejaVu_Sans',sans-serif] text-[15px] leading-none tracking-[-0.500px] text-black [font-stretch:condensed]">
      <div className="flex h-[47px] shrink-0 items-start border-b border-[#c1c8d4] bg-[linear-gradient(#dbe5f4_0px,#dbe5f4_1px,#f6f9fd_2px,#f6f9fd_3px,#c9d6e8_4px,#e4ebf4_12px,#fdfdff_28px,#fff_46px)] pl-4 text-[#2c3c70]">
        <div className="mt-[17px]"><MenuGlyph color="#2c3c70" /></div>
        <span className="mt-[22px] ml-4 w-[119px]">Warenein<U>g</U>ang</span>
        <span className="mt-[22px] w-[108px]"><U>E</U>instellungen</span>
        <span className="mt-[22px] w-[75px]">S<U>y</U>stem</span>
        <span className="mt-[22px]"><U>H</U>ilfe</span>
      </div>

      <div className="flex h-[38px] shrink-0 items-center gap-[7px] border-b border-[#c3c9d4] bg-gradient-to-b from-[#f4f6fa] to-white pb-[2px] pl-[27px]">
        <div className="mr-[7px]"><OkIcon /></div>
        <div className="mt-[2px] flex h-[26px] w-[181px] items-center justify-end rounded-[2px] border border-[#96999e] bg-white pr-[7px] shadow-[inset_0_1px_2px_#ccd]">
          <Svg w={11} h={6}><path d="M0 0h11L5.500 6z" fill="#223f73" /></Svg>
        </div>
        <Svg w={11} h={11} className="mr-[5px] ml-[4px]">
          <path d="M5 .5L1 5.500l4 5M10 .5L6 5.500l4 5" stroke="#555" strokeWidth="1.600" />
        </Svg>
        <SaveIcon />
        <GroupSep />
        <RoundIcon fill="#57a532" edge="#2f7d32" d="M13.500 10.500l-4 4 4 4M18.500 10.500l-4 4 4 4" />
        <RoundIcon fill="#ffb81c" edge="#e07b00" d="M10.500 13.500l4-4 4 4M10.500 18.500l4-4 4 4" />
        <RoundIcon fill="#e05a1b" edge="#b83a0c" d="M11.500 11.500l6.500 6.500M18 11.500l-6.500 6.500" />
        <GroupSep />
        <PrintIcon body="#d2d2d2" dark="#bcbcbc" paper="#c4c4c4" />
        <FindIcon a="#84add4" b="#155f8f" />
        <FindIcon a="#dcdcdc" b="#b9b9b9" plus />
        <GroupSep />
        <PageIcon arrows={[upTop, upBottom]} />
        <PageIcon arrows={[up]} />
        <PageIcon arrows={[down]} />
        <PageIcon arrows={["M5 2L.5 6.500h3V9h3V6.500h3z", "M5 19.500L.5 15h3v-4h3v4h3z"]} />
        <GroupSep />
        <WindowIcon>
          <circle cx="5" cy="15" r="3" fill="#ffb81c" stroke="#f08a00" />
          <path d="M5 10v10M0 15h10M1.500 11.500l7 7M8.500 11.500l-7 7" stroke="#f39a10" strokeWidth="1.200" />
        </WindowIcon>
        <WindowIcon>
          <path d="M5 18c-1-5 1-6 4-6M6 11h4.500v4.500" stroke="#333" strokeWidth="1.700" />
        </WindowIcon>
        <GroupSep />
        <HelpIcon />
        <MonitorIcon />
      </div>

      <div className="h-[10px] shrink-0 bg-gradient-to-b from-[#fafbfd] to-[#eceff5]" />

      <div className="mr-[15px] ml-[15px] flex h-[874px] shrink-0 flex-col border border-[#c9d2e2] bg-[#e8eff6]">
        <div className="-mt-px flex h-[38px] shrink-0 items-start border-y border-[#9aafc6] bg-gradient-to-b from-[#d3e1ee] via-[#b3cadf] to-[#a9c1da] pl-3">
          <div className="mt-1 border-b-2 border-[#eef4f9] pb-[2px]">
            <div className="flex h-6 w-12 rounded-[3px] border-[1.500px] border-[#8a8464] bg-gradient-to-b from-[#fcf4d0] to-[#fce588]">
              <Svg w={34} h={21} className="border-r border-[#a9a078]">
                <path d="M1 2h11v8H8l-4 5v-5H1z" fill="#ffb040" stroke="#e0661a" strokeWidth="1.400" />
                <path d="M3 5h7M3 8h7" stroke="#c84a10" strokeWidth="1.300" />
                <rect x="13" y="2" width="7" height="10" fill="#9fc0de" stroke="#155f8f" strokeWidth="1.400" />
                <path d="M15 5l3 2-3 2z" fill="#fff" />
                <path d="M7 13l4-3 4 3v3l-4 2-4-2z" fill="#fff" stroke="#999" strokeWidth=".8" />
              </Svg>
              <Svg w={10} h={21}><path d="M8 13v5H3z" fill="#222" /></Svg>
            </div>
          </div>
          <span className="mt-[7px] ml-[28px] font-['DejaVu_Sans',sans-serif] text-[20.500px] leading-[22px] font-bold tracking-[-0.500px] italic [font-stretch:normal]">
            Warenausgang Sonstige - L22C19
          </span>
        </div>
        <div className="flex h-[41px] shrink-0 items-center border-b border-[#b3c4d6] bg-[#cfdce8] pl-[18px]">
          <span className="w-[95px] tracking-[-0.420px]">Übersicht aus</span>
          <Sep />
          <Svg w={15} h={20} className="mr-[3px] ml-px">
            <path d="M1 1h8l5 5v13H1z" fill="#fff" stroke="#555" strokeWidth="1.600" />
            <path d="M9 0v6h6z" fill="#555" />
          </Svg>
          <Sep />
          <span className="ml-[6px] w-[203px]">Merken</span>
          <div className="mb-[12px] h-[6px] w-[19px] border-2 border-[#1a7fbd] bg-white" />
        </div>
        <div className="flex min-h-0 grow">
          <Sidebar />
          <div className="flex w-2 shrink-0 flex-col items-start justify-center gap-1 bg-[#dae5ec] pt-[14px] pl-px">
            {[0, 1, 2, 3, 4].map((i) => (
              <div key={i} className="h-1 w-1 bg-[#98a4b3] shadow-[1px_1px_0_#fff]" />
            ))}
          </div>
          <MainForm />
        </div>
      </div>

      <StatusBar />
      <Taskbar />

      <Assistant />

      <div className="absolute top-0 left-[809px] flex h-px w-[301px] bg-[#111]">
        <div className="w-[60px] bg-[#0a78d4]" />
      </div>
      <div className="absolute top-0 right-[24px] h-[34px] w-[120px]">
        <svg width="120" height="34" viewBox="0 0 120 34" className="absolute top-0 left-0 drop-shadow-[1px_3px_2px_rgba(0,0,0,0.4)]">
          <defs>
            <linearGradient id="tab" x1="0" y1="0" x2="0" y2="1">
              <stop offset="0" stopColor="#4a72cc" />
              <stop offset="1" stopColor="#1d3a7c" />
            </linearGradient>
          </defs>
          <path d="M0-2c2 2 2 3 2 6v23c0 2 1 3 3 3h74c6 0 9-2 14-7L118-2z" fill="url(#tab)" stroke="#10203f" strokeWidth="1.200" />
        </svg>
        <div className="relative flex gap-[3px] pt-[2px] pl-[24px]">
          <TitleBtn d={MIN} />
          <TitleBtn d={RESTORE} />
          <TitleBtn d={CLOSE} />
        </div>
      </div>
    </div>
  );
}
